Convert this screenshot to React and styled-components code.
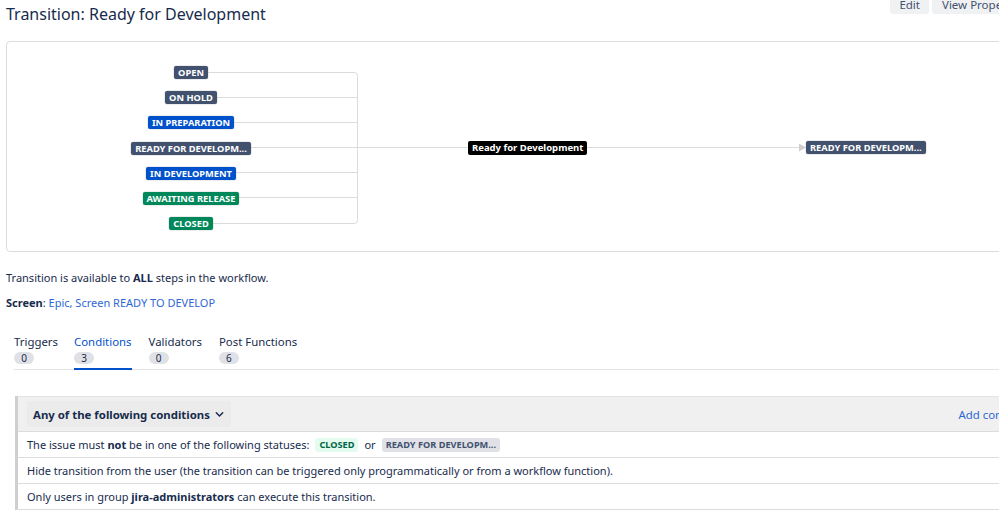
import React from "react";
import styled, { createGlobalStyle } from "styled-components";

const Global = createGlobalStyle`
  html, body { margin: 0; padding: 0; background: #fff; overflow: hidden; }
  body { font-family: "Noto Sans", "Open Sans", Arial, sans-serif; color: #172B4D; font-size: 11px; }
`;

const Page = styled.div`
  width: 1030px;
  padding-left: 6px;
`;

const Header = styled.div`
  display: flex;
  align-items: flex-start;
  justify-content: space-between;
  height: 28px;
`;

const Title = styled.h1`
  margin: 3px 0 0;
  font-size: 16px;
  font-weight: 400;
  line-height: 22px;
  color: #172B4D;
`;

const Buttons = styled.div`
  display: flex;
  gap: 3px;
  margin-top: -14px;
`;

const Button = styled.div`
  background: #f0f1f3;
  color: #42526E;
  font-size: 11.5px;
  height: 28px;
  line-height: 38px;
  padding: 0 ${(p) => p.$pad || 10}px;
  border-radius: 3px;
  white-space: nowrap;
`;

const Diagram = styled.div`
  position: relative;
  margin-top: 13px;
  height: 209px;
  border: 1px solid #dcdcdc;
  border-radius: 4px;
`;

const Connectors = styled.svg`
  position: absolute;
  left: 0;
  top: 0;
`;

const SourceColumn = styled.div`
  position: relative;
  width: 368px;
  padding-top: 18px;
  display: flex;
  flex-direction: column;
  align-items: center;
`;

const SourceSlot = styled.div`
  height: 25.2px;
  display: flex;
  align-items: center;
`;

const lozColors = {
  dark: "#42526E",
  blue: "#0052CC",
  green: "#00875A",
};

const Lozenge = styled.span`
  display: inline-block;
  background: ${(p) => lozColors[p.$tone]};
  color: #fff;
  font-size: 9.3px;
  font-weight: 700;
  line-height: 13px;
  padding: 0 4px;
  border-radius: 2px;
  text-transform: uppercase;
  white-space: nowrap;
  box-shadow: 0 0 0 0.5px rgba(0,0,0,0.15);
`;

const Node = styled.div`
  position: absolute;
  top: ${(p) => p.$y}px;
  left: ${(p) => p.$x}px;
  display: flex;
`;

const TransitionLabel = styled.span`
  display: inline-block;
  background: #000;
  color: #fff;
  font-size: 9.5px;
  font-weight: 700;
  line-height: 14px;
  padding: 0 4px;
  border-radius: 2px;
  white-space: nowrap;
`;

const Info = styled.p`
  margin: ${(p) => p.$mt}px 0 0;
  font-size: 11px;
  line-height: 16px;
`;

const Link = styled.a`
  color: #2e67d4;
  text-decoration: none;
`;

const Tabs = styled.div`
  display: flex;
  margin: 22px 0 0 8px;
  border-bottom: 1px solid #e2e4e8;
  width: 1000px;
`;

const Tab = styled.div`
  display: flex;
  flex-direction: column;
  align-items: flex-start;
  margin-right: ${(p) => p.$mr}px;
  padding-bottom: 4px;
  border-bottom: 2px solid ${(p) => (p.$active ? "#0052CC" : "transparent")};
  margin-bottom: -1px;
`;

const TabLabel = styled.span`
  font-size: 11.4px;
  line-height: 17px;
  color: ${(p) => (p.$active ? "#0052CC" : "#172B4D")};
`;

const Count = styled.span`
  margin-top: 2px;
  background: #dfe1e6;
  color: #172B4D;
  font-size: 10px;
  line-height: 12px;
  min-width: 20px;
  text-align: center;
  border-radius: 6px;
`;

const Panel = styled.div`
  margin: 26px 0 0 9px;
  border-left: 3px solid #cfcfcf;
  border-bottom: 1px solid #dcdcdc;
  width: 1017px;
`;

const PanelHeader = styled.div`
  display: flex;
  align-items: center;
  justify-content: space-between;
  background: #f0f0f0;
  height: 34px;
  padding: 0 0 0 9px;
  border-top: 1px solid #e4e4e4;
  border-bottom: 1px solid #dcdcdc;
`;

const GroupButton = styled.div`
  display: flex;
  align-items: center;
  gap: 4px;
  background: #ebebeb;
  height: 26px;
  padding: 0 6px 0 6px;
  border-radius: 3px;
  font-size: 11.4px;
  font-weight: 700;
`;

const AddLink = styled.span`
  color: #2e67d4;
  font-size: 11.4px;
  margin-right: 2px;
`;

const Row = styled.div`
  display: flex;
  align-items: center;
  gap: 4px;
  height: 25px;
  padding-left: 9px;
  font-size: 11px;
  white-space: nowrap;
  & + & {
    border-top: 1px solid #dcdcdc;
  }
`;

const subtleColors = {
  green: { bg: "#e3fcef", fg: "#006644" },
  gray: { bg: "#dfe1e6", fg: "#42526E" },
};

const SubtleLozenge = styled.span`
  background: ${(p) => subtleColors[p.$tone].bg};
  color: ${(p) => subtleColors[p.$tone].fg};
  font-size: 9.2px;
  font-weight: 700;
  line-height: 14px;
  padding: 0 4px;
  border-radius: 3px;
  margin: 0 ${(p) => p.$mx || 0}px;
`;

const sources = [
  ["Open", "dark"],
  ["On hold", "dark"],
  ["In preparation", "blue"],
  ["Ready for developm...", "dark"],
  ["In development", "blue"],
  ["Awaiting release", "green"],
  ["Closed", "green"],
];

const Chevron = () => (
  <svg width="11" height="11" viewBox="0 0 12 12">
    <path d="M2.5 4.2 L6 7.7 L9.5 4.2" fill="none" stroke="#172B4D" strokeWidth="1.6" strokeLinecap="round" strokeLinejoin="round" />
  </svg>
);

export default function App() {
  const ys = [30.5, 55.5, 80.5, 105.5, 130.5, 155.5, 181.5];
  return (
    <>
      <Global />
      <Page>
        <Header>
          <Title>Transition: Ready for Development</Title>
          <Buttons>
            <Button $pad={9}>Edit</Button>
            <Button>View Properties</Button>
          </Buttons>
        </Header>

        <Diagram>
          <Connectors width="1000" height="209">
            <g stroke="#dcdcdc" strokeWidth="1" fill="none">
              {ys.slice(1, -1).map((y) => (
                <line key={y} x1="184" y1={y} x2="350.5" y2={y} />
              ))}
              <path d={`M184 ${ys[0]} H347.5 Q350.5 ${ys[0]} 350.5 ${ys[0] + 3} V${ys[6] - 3} Q350.5 ${ys[6]} 347.5 ${ys[6]} H184`} />
              <line x1="350.5" y1="105.5" x2="795" y2="105.5" />
            </g>
            <path d="M792 101.5 L799 105.5 L792 109.5 Z" fill="#cfcfcf" />
          </Connectors>
          <SourceColumn>
            {sources.map(([label, tone]) => (
              <SourceSlot key={label}>
                <Lozenge $tone={tone}>{label}</Lozenge>
              </SourceSlot>
            ))}
          </SourceColumn>
          <Node $x={461} $y={98.5}>
            <TransitionLabel>Ready for Development</TransitionLabel>
          </Node>
          <Node $x={799} $y={99}>
            <Lozenge $tone="dark">Ready for developm...</Lozenge>
          </Node>
        </Diagram>

        <Info $mt={18}>
          Transition is available to <b>ALL</b> steps in the workflow.
        </Info>
        <Info $mt={9}>
          <b>Screen</b>: <Link>Epic, Screen READY TO DEVELOP</Link>
        </Info>

        <Tabs>
          <Tab $mr={16}>
            <TabLabel>Triggers</TabLabel>
            <Count>0</Count>
          </Tab>
          <Tab $mr={17} $active>
            <TabLabel $active>Conditions</TabLabel>
            <Count>3</Count>
          </Tab>
          <Tab $mr={17}>
            <TabLabel>Validators</TabLabel>
            <Count>0</Count>
          </Tab>
          <Tab>
            <TabLabel>Post Functions</TabLabel>
            <Count>6</Count>
          </Tab>
        </Tabs>

        <Panel>
          <PanelHeader>
            <GroupButton>
              Any of the following conditions <Chevron />
            </GroupButton>
            <AddLink>Add condition</AddLink>
          </PanelHeader>
          <Row>
            <span>
              The issue must <b>not</b> be in one of the following statuses:
            </span>
            <SubtleLozenge $tone="green" $mx={2}>CLOSED</SubtleLozenge>
            <span>or</span>
            <SubtleLozenge $tone="gray" $mx={2}>READY FOR DEVELOPM...</SubtleLozenge>
          </Row>
          <Row>
            Hide transition from the user (the transition can be triggered only programmatically or from a workflow function).
          </Row>
          <Row>
            <span>
              Only users in group <b>jira-administrators</b> can execute this transition.
            </span>
          </Row>
        </Panel>
      </Page>
    </>
  );
}
